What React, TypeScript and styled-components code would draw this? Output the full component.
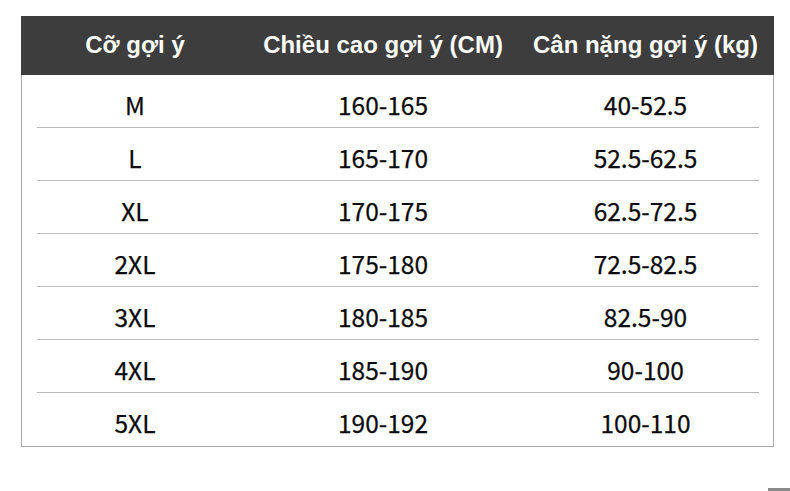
import React from 'react';
import styled, { createGlobalStyle } from 'styled-components';

const GlobalStyle = createGlobalStyle`
  html, body {
    margin: 0;
    padding: 0;
    background: #ffffff;
  }
`;

const Page = styled.div`
  width: 790px;
  height: 491px;
  padding: 16px 0 0 21px;
  box-sizing: border-box;
  display: flex;
  flex-direction: column;
  background: #ffffff;
`;

const Table = styled.div`
  width: 753px;
  border: 1px solid #a8a8a8;
  border-top: none;
  box-sizing: border-box;
  background: #ffffff;
`;

const cols = '226px 270px 1fr';

const HeaderRow = styled.div`
  display: grid;
  grid-template-columns: ${cols};
  height: 59px;
  align-items: center;
  background: #3d3d3d;
  margin: 0 -1px;
  padding: 0 1px;
`;

const HeaderCell = styled.div`
  text-align: center;
  color: #ffffff;
  font-family: 'Liberation Sans', Arial, sans-serif;
  font-weight: bold;
  font-size: 24px;
  white-space: nowrap;
  padding-bottom: 2px;
`;

const Row = styled.div<{ $last?: boolean }>`
  display: grid;
  grid-template-columns: ${cols};
  height: 53px;
  align-items: center;
  position: relative;

  &::after {
    content: '';
    display: ${p => (p.$last ? 'none' : 'block')};
    position: absolute;
    left: 15px;
    right: 14px;
    bottom: 0;
    height: 1px;
    background: #b8b8b8;
  }
`;

const Cell = styled.div`
  text-align: center;
  color: #0a0a0a;
  font-family: 'Noto Sans CJK SC', 'Noto Sans', sans-serif;
  font-size: 24.5px;
  padding-top: 6px;
  -webkit-text-stroke: 0.25px #0a0a0a;
`;

const Corner = styled.div`
  align-self: flex-end;
  width: 22px;
  height: 3px;
  margin-top: auto;
  background: #8a8a8a;
`;

const rows = [
  ['M', '160-165', '40-52.5'],
  ['L', '165-170', '52.5-62.5'],
  ['XL', '170-175', '62.5-72.5'],
  ['2XL', '175-180', '72.5-82.5'],
  ['3XL', '180-185', '82.5-90'],
  ['4XL', '185-190', '90-100'],
  ['5XL', '190-192', '100-110'],
];

export default function App() {
  return (
    <>
      <GlobalStyle />
      <Page>
        <Table>
          <HeaderRow>
            <HeaderCell>Cỡ gợi ý</HeaderCell>
            <HeaderCell>Chiều cao gợi ý (CM)</HeaderCell>
            <HeaderCell>Cân nặng gợi ý (kg)</HeaderCell>
          </HeaderRow>
          {rows.map((r, i) => (
            <Row key={r[0]} $last={i === rows.length - 1}>
              {r.map(v => (
                <Cell key={v}>{v}</Cell>
              ))}
            </Row>
          ))}
        </Table>
        <Corner />
      </Page>
    </>
  );
}
